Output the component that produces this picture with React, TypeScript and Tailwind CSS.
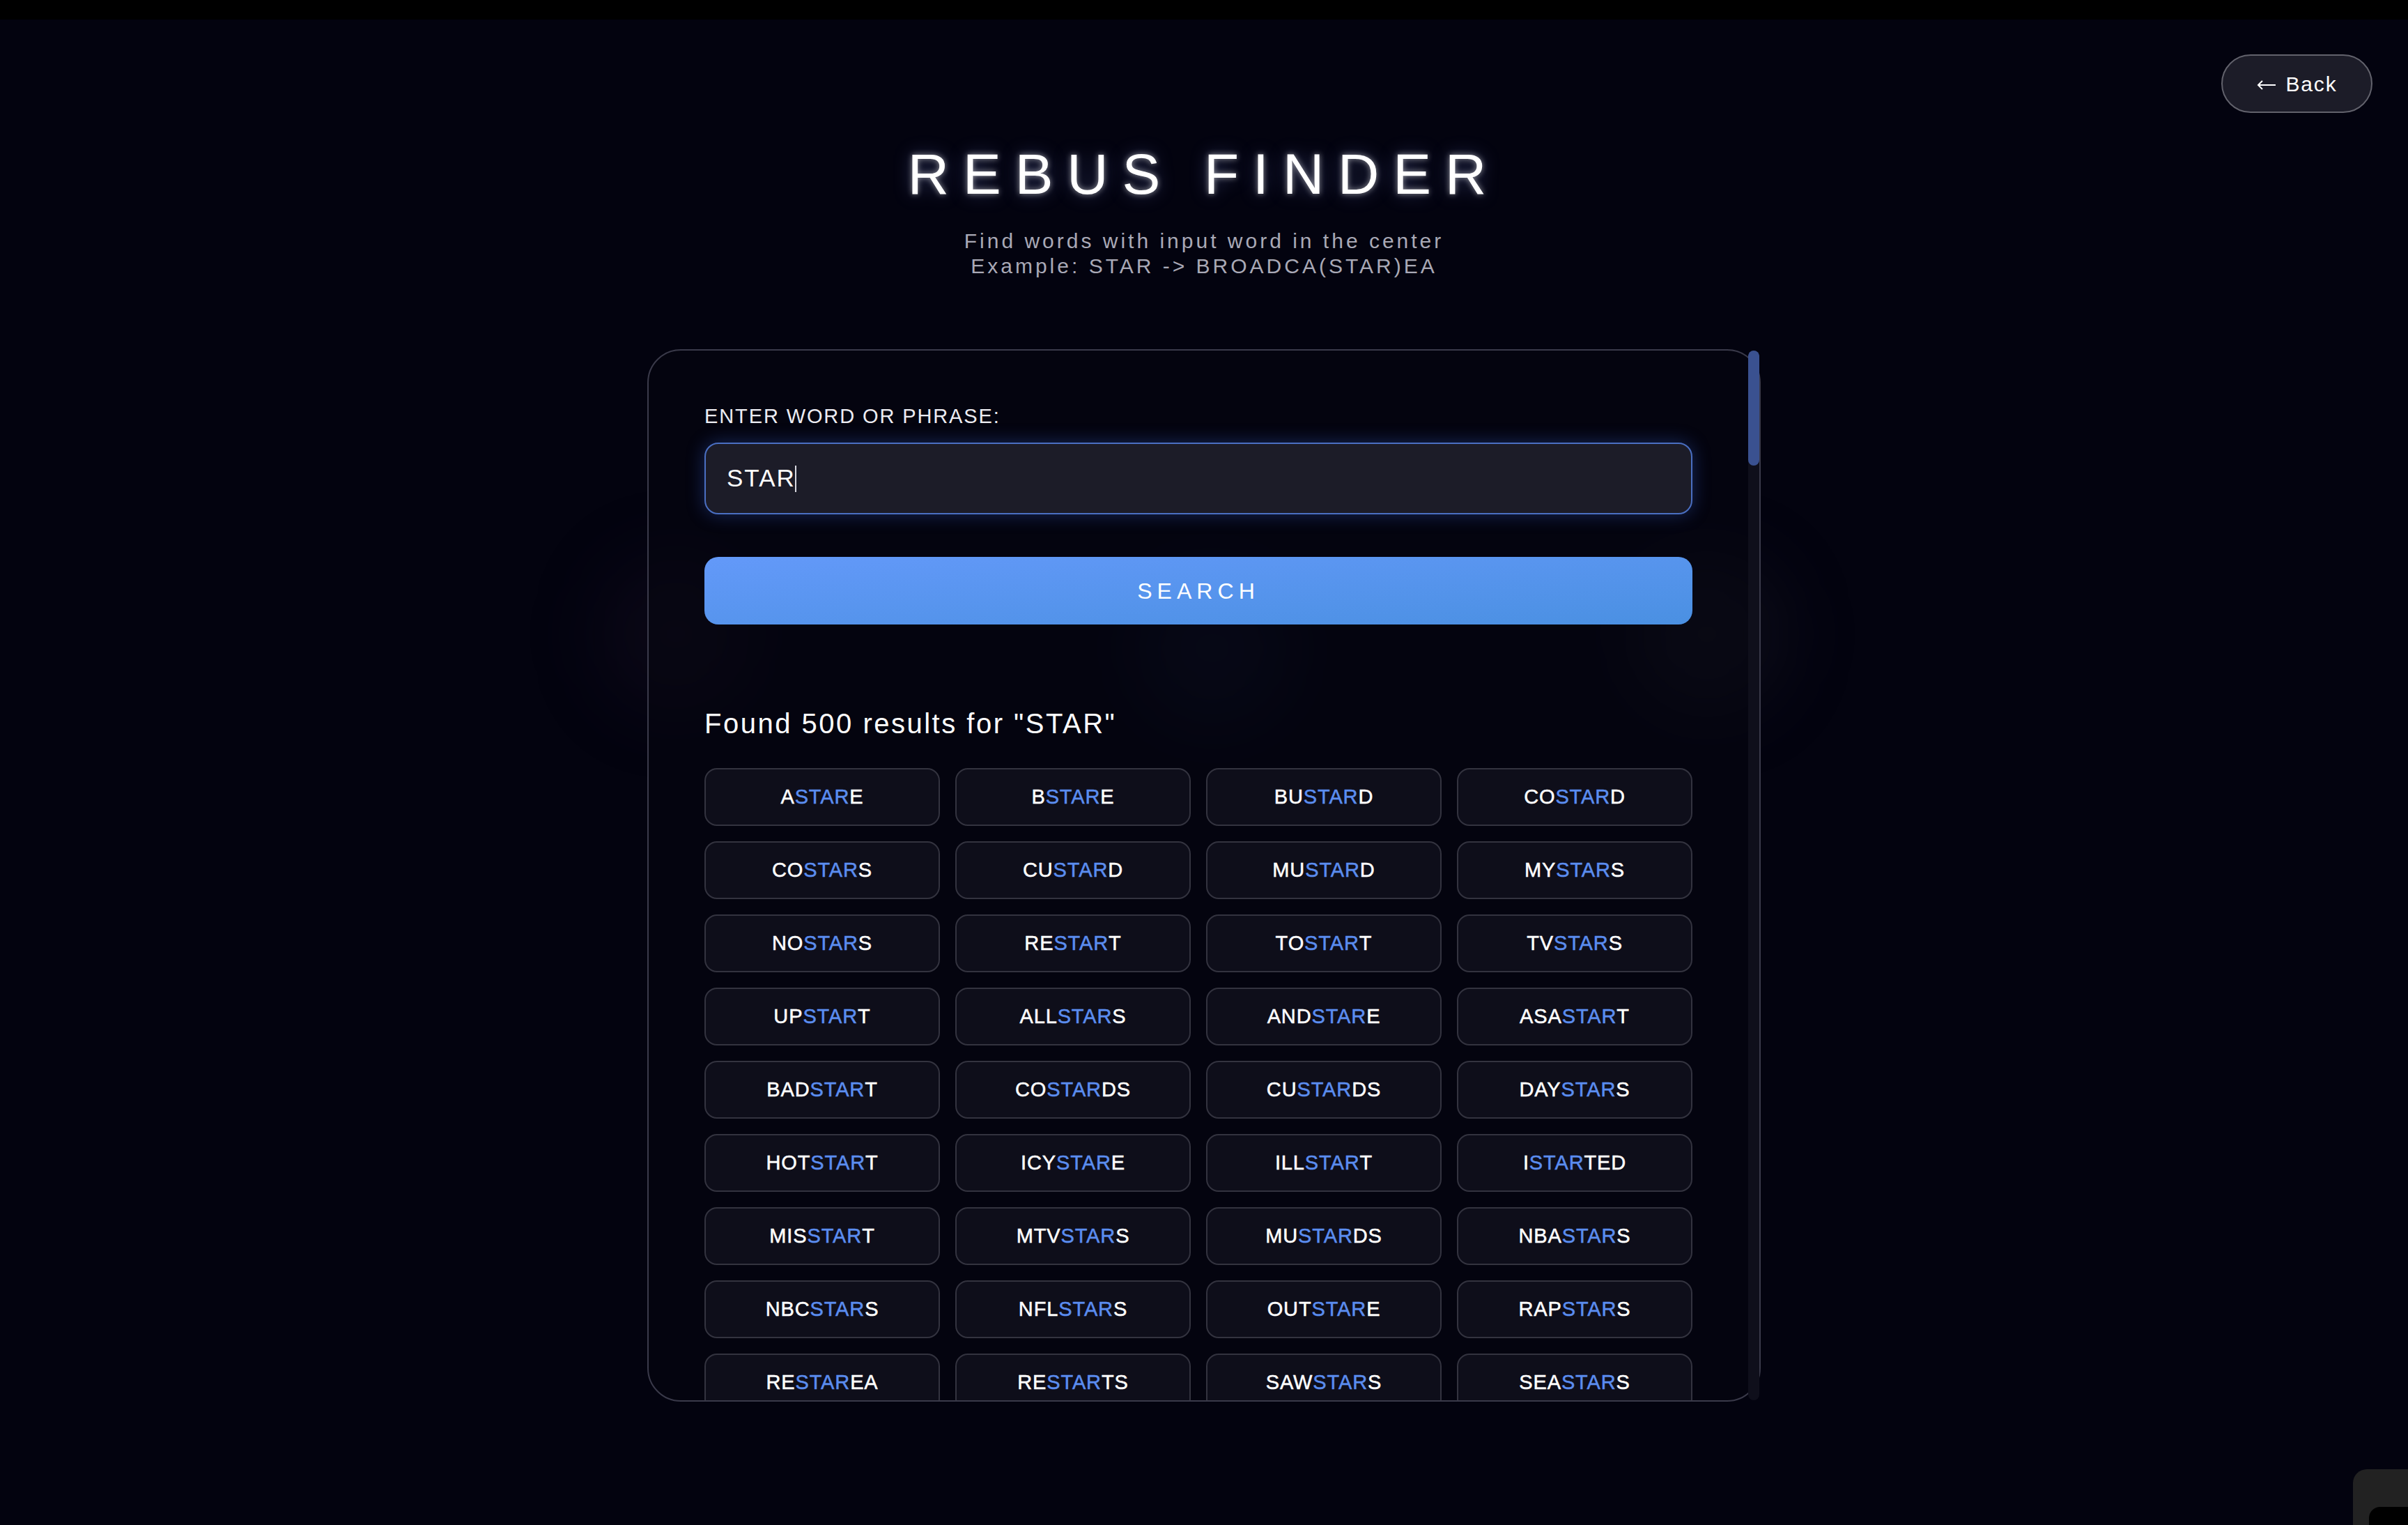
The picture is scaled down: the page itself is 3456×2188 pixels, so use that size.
import React from "react";

const WORDS = [
  "ASTARE", "BSTARE", "BUSTARD", "COSTARD",
  "COSTARS", "CUSTARD", "MUSTARD", "MYSTARS",
  "NOSTARS", "RESTART", "TOSTART", "TVSTARS",
  "UPSTART", "ALLSTARS", "ANDSTARE", "ASASTART",
  "BADSTART", "COSTARDS", "CUSTARDS", "DAYSTARS",
  "HOTSTART", "ICYSTARE", "ILLSTART", "ISTARTED",
  "MISSTART", "MTVSTARS", "MUSTARDS", "NBASTARS",
  "NBCSTARS", "NFLSTARS", "OUTSTARE", "RAPSTARS",
  "RESTAREA", "RESTARTS", "SAWSTARS", "SEASTARS",
];

function Highlight({ word }: { word: string }) {
  const i = word.indexOf("STAR");
  return (
    <>
      {word.slice(0, i)}
      <span className="text-[#5b8def]">STAR</span>
      {word.slice(i + 4)}
    </>
  );
}

export default function App() {
  return (
    <div className="relative h-screen overflow-hidden bg-[#03030f] font-['Liberation_Sans',Arial,sans-serif] text-white">
      <div className="h-[28px] bg-black" />

      {/* faint orbs behind the card */}
      <div className="pointer-events-none absolute left-[860px] top-[800px] h-[220px] w-[220px] rounded-full bg-[#2a1a30]/20 blur-[50px]" />
      <div className="pointer-events-none absolute left-[1630px] top-[820px] h-[220px] w-[220px] rounded-full bg-[#1a2850]/20 blur-[50px]" />
      <div className="pointer-events-none absolute left-[2340px] top-[800px] h-[220px] w-[220px] rounded-full bg-[#262634]/25 blur-[50px]" />

      <button className="absolute right-[51px] top-[78px] flex h-[84px] w-[217px] items-center justify-center gap-[14px] rounded-full border-2 border-[#62626c] bg-[#1c1c28] text-[30px] tracking-[0.06em] text-white">
        <svg width="28" height="14" viewBox="0 0 28 14" fill="none" stroke="currentColor" strokeWidth="2" className="mt-[4px]">
          <path d="M27 7H2M8 1L2 7l6 6" />
        </svg>
        <span>Back</span>
      </button>

      <main className="relative flex flex-col items-center">
        <h1 className="mt-[181px] text-[82px] font-light leading-none tracking-[20px] text-white [text-shadow:0_0_8px_rgba(255,255,255,0.55),0_0_26px_rgba(140,160,255,0.35)]">
          REBUS FINDER
        </h1>
        <p className="mt-[37px] text-center text-[30px] leading-[36px] tracking-[4px] text-[#a9a9b6]">
          Find words with input word in the center
          <br />
          Example: STAR -&gt; BROADCA(STAR)EA
        </p>

        <section className="mt-[101px] flex h-[1510px] w-[1598px] rounded-[48px] border-2 border-[#3a3a4a] bg-[#05050f]/50">
          <div className="min-w-0 flex-1 overflow-hidden rounded-l-[46px] px-[80px] pt-[80px]">
            <label className="block text-[29px] leading-none tracking-[0.065em] text-[#ececf2]">
              ENTER WORD OR PHRASE:
            </label>
            <div className="mt-[23px] flex h-[103px] items-center rounded-[20px] border-2 border-[#4a6fc2] bg-[#1c1c28] pl-[30px] shadow-[0_0_26px_rgba(60,110,230,0.35)]">
              <span className="text-[35px] tracking-[2px] text-white">STAR</span>
              <span className="ml-[-1px] inline-block h-[38px] w-[2px] bg-[#d8d8e0]" />
            </div>

            <button className="mt-[61px] flex h-[97px] w-full items-center justify-center rounded-[20px] bg-gradient-to-br from-[#6399f9] to-[#4a90e2] text-[32px] tracking-[0.22em] text-white">
              SEARCH
            </button>

            <h2 className="mt-[122px] text-[40px] leading-none tracking-[2.5px] text-white">
              Found 500 results for "STAR"
            </h2>

            <div className="mt-[44px] grid grid-cols-4 gap-[22px]">
              {WORDS.map((w) => (
                <div
                  key={w}
                  className="flex h-[83px] items-center justify-center rounded-[18px] border-2 border-[#33333f] bg-[#0e0e1a] text-[29px] tracking-[0.03em] text-white [-webkit-text-stroke:0.5px_currentColor]"
                >
                  <Highlight word={w} />
                </div>
              ))}
            </div>
          </div>

          {/* scrollbar */}
          <div className="w-[16px] shrink-0 rounded-full bg-[#0f0f1b]">
            <div className="h-[165px] rounded-full bg-[#3a5190]" />
          </div>
        </section>
      </main>

      <div className="absolute bottom-[-20px] right-[-20px] h-[100px] w-[99px] rounded-[20px] bg-[#222222] pl-[23px] pt-[54px]">
        <div className="h-full w-full rounded-[16px] bg-black" />
      </div>
    </div>
  );
}
